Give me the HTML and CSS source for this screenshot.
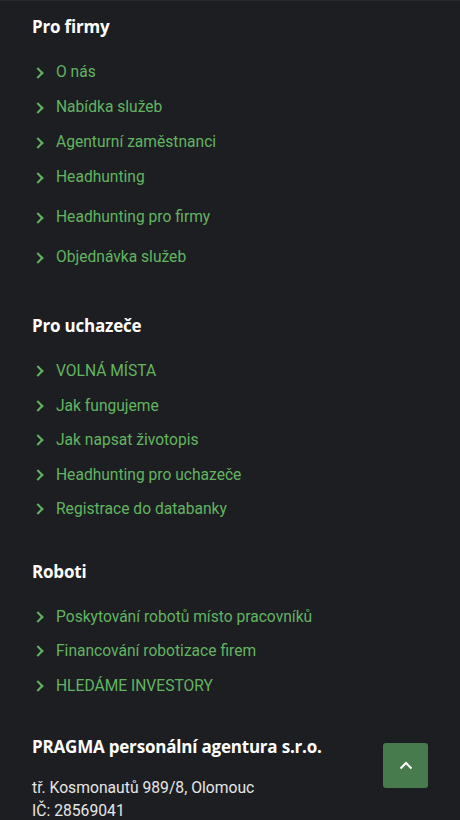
FILE: index.html
```html
<!DOCTYPE html>
<html lang="cs">
<head>
  <meta charset="UTF-8" />
  <meta name="viewport" content="width=device-width, initial-scale=1.0" />
  <title>PRAGMA - patička</title>
  <link rel="stylesheet" href="styles.css">
</head>
<body>
  <footer class="footer">
    <section class="footer-section section-firms">
      <h4>Pro firmy</h4>
      <ul class="links links-first">
        <li><a href="#">O nás</a></li>
        <li><a href="#">Nabídka služeb</a></li>
        <li><a href="#">Agenturní zaměstnanci</a></li>
        <li><a href="#">Headhunting</a></li>
        <li class="wide"><a href="#">Headhunting pro firmy</a></li>
        <li class="wide"><a href="#">Objednávka služeb</a></li>
      </ul>
    </section>

    <section class="footer-section">
      <h4>Pro uchazeče</h4>
      <ul class="links">
        <li><a href="#">VOLNÁ MÍSTA</a></li>
        <li><a href="#">Jak fungujeme</a></li>
        <li><a href="#">Jak napsat životopis</a></li>
        <li><a href="#">Headhunting pro uchazeče</a></li>
        <li><a href="#">Registrace do databanky</a></li>
      </ul>
    </section>

    <section class="footer-section section-robots">
      <h4>Roboti</h4>
      <ul class="links">
        <li><a href="#">Poskytování robotů místo pracovníků</a></li>
        <li><a href="#">Financování robotizace firem</a></li>
        <li><a href="#">HLEDÁME INVESTORY</a></li>
      </ul>
    </section>

    <section class="footer-section company">
      <h4>PRAGMA personální agentura s.r.o.</h4>
      <p>tř. Kosmonautů 989/8, Olomouc<br>IČ: 28569041</p>
    </section>
  </footer>

  <a href="#" class="to-top" aria-label="Nahoru">
    <svg width="14" height="9" viewBox="0 0 14 9"><polyline points="1.5,7.5 7,2 12.5,7.5" fill="none" stroke="#fff" stroke-width="2"/></svg>
  </a>
</body>
</html>
```

FILE: styles.css
```css
* {
  box-sizing: border-box;
  margin: 0;
  padding: 0;
}

body {
  font-family: Roboto, 'Liberation Sans', sans-serif;
  background-color: #1d1e22;
  min-height: 100vh;
}

.footer {
  border-top: 1px solid #28292e;
  padding: 14px 32px 0;
}

.footer-section {
  margin-bottom: 33px;
}

.section-firms {
  margin-bottom: 39px;
}

.section-robots {
  margin-bottom: 32px;
}

.footer-section h4 {
  font-family: 'Open Sans', sans-serif;
  font-weight: 700;
  font-size: 17px;
  line-height: 24px;
  color: #fff;
  margin-bottom: 16px;
  letter-spacing: -0.2px;
}

.links {
  list-style: none;
}

.links li {
  line-height: 34.5px;
  font-size: 15.6px;
}

.links-first li {
  line-height: 35px;
}

.links li.wide {
  margin-top: 5px;
}

.links a {
  display: flex;
  align-items: center;
  color: #62b460;
  text-decoration: none;
}

.links a::before {
  content: "";
  width: 6px;
  height: 6px;
  border-top: 2.5px solid #62b460;
  border-right: 2.5px solid #62b460;
  transform: rotate(45deg);
  margin: 0 14px 0 2px;
}

.company h4 {
  margin-bottom: 17px;
}

.company p {
  color: #e6e6e6;
  font-size: 15.7px;
  line-height: 23px;
}

.to-top {
  position: fixed;
  right: 32px;
  bottom: 32px;
  width: 45px;
  height: 45px;
  border-radius: 3px;
  background-color: #477a4c;
  display: flex;
  align-items: center;
  justify-content: center;
}
```
